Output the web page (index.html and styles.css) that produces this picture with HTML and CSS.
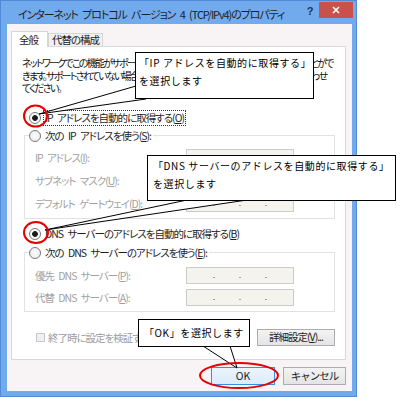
FILE: index.html
```html
<!DOCTYPE html>
<html lang="ja">

<head>
  <meta charset="UTF-8">
  <title>インターネット プロトコル バージョン 4 (TCP/IPv4)のプロパティ</title>
  <link rel="stylesheet" href="styles.css">
</head>

<body>
  <div class="stage">
    <div class="window">
      <div class="titlebar">
        <span class="title">インターネット プロトコル バージョン 4 (TCP/IPv4)のプロパティ</span>
        <span class="help">?</span>
        <span class="close">
          <svg width="8" height="8" viewBox="0 0 8 8"><path d="M1 1L7 7M7 1L1 7" stroke="#fff" stroke-width="1.6"/></svg>
        </span>
      </div>

      <div class="client">
        <div class="tabs">
          <div class="tab active">全般</div>
          <div class="tab">代替の構成</div>
        </div>

        <div class="panel">
          <p class="desc">ネットワークでこの機能がサポートされている場合は、IP 設定を自動的に取得することがで<br>きます。サポートされていない場合は、ネットワーク管理者に適切な IP 設定を問い合わせ<br>てください。</p>

          <div class="opt first"><span class="radio on"></span><span class="focus">IP アドレスを自動的に取得する(<u>O</u>)</span></div>

          <fieldset class="group">
            <legend><span class="opt"><span class="radio"></span><span>次の IP アドレスを使う(<u>S</u>):</span></span></legend>
            <div class="fields">
              <div class="field"><span>IP アドレス(<u>I</u>):</span><span class="ip"><i></i><i></i><i></i></span></div>
              <div class="field"><span>サブネット マスク(<u>U</u>):</span><span class="ip"><i></i><i></i><i></i></span></div>
              <div class="field"><span>デフォルト ゲートウェイ(<u>D</u>):</span><span class="ip"><i></i><i></i><i></i></span></div>
            </div>
          </fieldset>

          <div class="opt third"><span class="radio on"></span><span>DNS サーバーのアドレスを自動的に取得する(<u>B</u>)</span></div>

          <fieldset class="group dns">
            <legend><span class="opt"><span class="radio"></span><span>次の DNS サーバーのアドレスを使う(<u>E</u>):</span></span></legend>
            <div class="fields">
              <div class="field"><span>優先 DNS サーバー(<u>P</u>):</span><span class="ip"><i></i><i></i><i></i></span></div>
              <div class="field"><span>代替 DNS サーバー(<u>A</u>):</span><span class="ip"><i></i><i></i><i></i></span></div>
            </div>
          </fieldset>

          <div class="panel-foot">
            <label class="check"><span class="box"></span><span>終了時に設定を検証する</span></label>
            <button class="btn adv">詳細設定(<u>V</u>)...</button>
          </div>
        </div>

        <div class="actions">
          <button class="btn ok">OK</button>
          <button class="btn cancel">キャンセル</button>
        </div>
      </div>
    </div>

    <svg class="marks" width="414" height="397" viewBox="0 0 414 397">
      <polygon points="136,86 39,114 146,99" fill="#fff" stroke="#000" stroke-width="1"/>
      <polygon points="187,200 45,230 247,200" fill="#fff" stroke="#000" stroke-width="1"/>
      <polygon points="203,346 237,368 230,346" fill="#fff" stroke="#000" stroke-width="1"/>
      <ellipse cx="35.5" cy="116" rx="11.5" ry="10.5" fill="none" stroke="#e60000" stroke-width="2"/>
      <ellipse cx="36" cy="232.5" rx="12" ry="10.5" fill="none" stroke="#e60000" stroke-width="2"/>
      <ellipse cx="239" cy="375.5" rx="39" ry="12.5" fill="none" stroke="#e60000" stroke-width="2"/>
    </svg>

    <div class="callout c1">「IP アドレスを自動的に取得する」<br>を選択します</div>
    <div class="callout c2">「DNS サーバーのアドレスを自動的に取得する」<br>を選択します</div>
    <div class="callout c3">「OK」を選択します</div>
  </div>
</body>

</html>
```

FILE: styles.css
```css
body {
  margin: 0;
  background: #fff;
  font-family: "Noto Sans CJK JP", "Noto Sans", sans-serif;
  font-feature-settings: "palt";
  color: #1e1e1e;
}

.stage {
  position: relative;
  width: 414px;
  height: 397px;
  overflow: hidden;
}

.window {
  width: 357px;
  height: 397px;
  box-sizing: border-box;
  background: #72aaee;
  border: 1px solid #4f8ad6;
  display: flex;
  flex-direction: column;
}

.titlebar {
  height: 23px;
  display: flex;
  align-items: flex-start;
}

.title {
  margin: 6px 0 0 17px;
  font-size: 11px;
  line-height: 14px;
  letter-spacing: -1.1px;
  word-spacing: 3px;
  color: #1f1f1f;
  white-space: nowrap;
}

.help {
  margin: 3px 3px 0 auto;
  width: 12px;
  text-align: center;
  font-family: "Liberation Sans", sans-serif;
  font-weight: bold;
  font-size: 11px;
  line-height: 14px;
  color: #1d3650;
}

.close {
  width: 34px;
  height: 16px;
  margin: 1px 3px 0 0;
  background: #c9504b;
  display: flex;
  align-items: center;
  justify-content: center;
}

.client {
  flex: 1;
  margin: 0 4px 5px 6px;
  padding: 7px 6px 0 4px;
  background: #f8f4f6;
  display: flex;
  flex-direction: column;
}

/* tabs */
.tabs {
  display: flex;
  align-items: flex-end;
  height: 15px;
}

.tab {
  box-sizing: border-box;
  height: 13px;
  padding: 0 3px;
  border: 1px solid #d6d6d6;
  border-bottom: none;
  background: #f3f0f1;
  font-size: 10.5px;
  line-height: 12px;
  letter-spacing: -1px;
}

.tab.active {
  position: relative;
  z-index: 1;
  height: 16px;
  width: 37px;
  margin-bottom: -1px;
  padding: 2px 0 0 7px;
  background: #fff;
}

/* panel */
.panel {
  border: 1px solid #d9d9d9;
  background: #fff;
  padding: 10px 10px 13px 10px;
  font-size: 10.5px;
  letter-spacing: -1px;
  word-spacing: 3px;
}

.desc {
  margin: 0;
  font-size: 10px;
  letter-spacing: -1.75px;
  line-height: 12.5px;
  white-space: nowrap;
  color: #111;
}

.opt {
  display: flex;
  align-items: center;
  gap: 4px;
  height: 14px;
  line-height: 14px;
  white-space: nowrap;
}

.opt.first {
  margin: 16px 0 0 7px;
}

.opt.third {
  margin: 8px 0 0 7px;
}

.focus {
  outline: 1px dotted #333;
  padding: 0 1px;
  margin-left: -1px;
}

.radio {
  flex: none;
  width: 12px;
  height: 12px;
  box-sizing: border-box;
  border-radius: 50%;
  border: 1px solid #7a7a7a;
  background: radial-gradient(circle, #fbfbfb 0, #ececec 6px);
}

.radio.on {
  background: radial-gradient(circle, #1b1b1b 2.5px, #fafafa 3.2px);
}

.group {
  margin: 4px 0 0 2px;
  padding: 0 0 6px 4px;
  border: 1px solid #e3e1e4;
  min-inline-size: 0;
}

.group legend {
  padding: 0 2px 0 0;
}

.group.dns {
  margin-top: 5px;
  padding-bottom: 5px;
}

.fields {
  margin: 6px 0 0 6px;
  display: flex;
  flex-direction: column;
  gap: 6px;
}

.dns .fields {
  margin-top: 7px;
  gap: 5px;
}

.field {
  display: grid;
  grid-template-columns: 151px 108px;
  align-items: center;
  color: #a2a2a2;
  white-space: nowrap;
}

.ip {
  box-sizing: border-box;
  height: 17px;
  border: 1px solid #cdcbc6;
  background: #f5f3ee;
  display: flex;
  align-items: center;
  justify-content: center;
  gap: 24px;
  padding-top: 4px;
}

.ip i {
  width: 2px;
  height: 1px;
  background: #a0a0a0;
}

.panel-foot {
  margin-top: 17px;
  display: flex;
  justify-content: space-between;
  align-items: center;
}

.check {
  display: flex;
  align-items: center;
  gap: 3px;
  margin-left: 14px;
  color: #9c9c9c;
}

.check .box {
  width: 9px;
  height: 9px;
  box-sizing: border-box;
  border: 1px solid #c8c8c8;
  background: #efeef3;
}

/* buttons */
.btn {
  box-sizing: border-box;
  height: 17px;
  padding: 0;
  border: 1px solid #adadad;
  background: linear-gradient(#f3f3f3, #e4e4e4);
  font-family: inherit;
  font-size: 10.5px;
  letter-spacing: -1px;
  line-height: 14px;
  color: #1e1e1e;
}

.btn.adv {
  width: 78px;
}

.actions {
  margin-top: 7px;
  display: flex;
  justify-content: flex-end;
  gap: 8px;
}

.actions .btn {
  height: 18px;
}

.btn.ok {
  width: 64px;
  border-color: #3c8fdf;
  background: linear-gradient(#eaf4fc, #dcecfb);
  letter-spacing: 0;
}

.btn.cancel {
  width: 63px;
}

/* annotations */
.marks {
  position: absolute;
  left: 0;
  top: 0;
  pointer-events: none;
}

.callout {
  position: absolute;
  box-sizing: border-box;
  background: #fff;
  border: 1px solid #000;
  font-size: 10px;
  line-height: 18px;
  letter-spacing: 0.6px;
  color: #000;
  white-space: nowrap;
  font-feature-settings: normal;
}

.c1 {
  left: 135px;
  top: 52px;
  width: 179px;
  height: 47px;
  padding: 1px 0 0 3px;
}

.c2 {
  left: 147px;
  top: 155px;
  width: 249px;
  height: 46px;
  padding: 1px 0 0 5px;
}

.c3 {
  left: 138px;
  top: 319px;
  width: 112px;
  height: 28px;
  padding: 4px 0 0 5px;
}
```
